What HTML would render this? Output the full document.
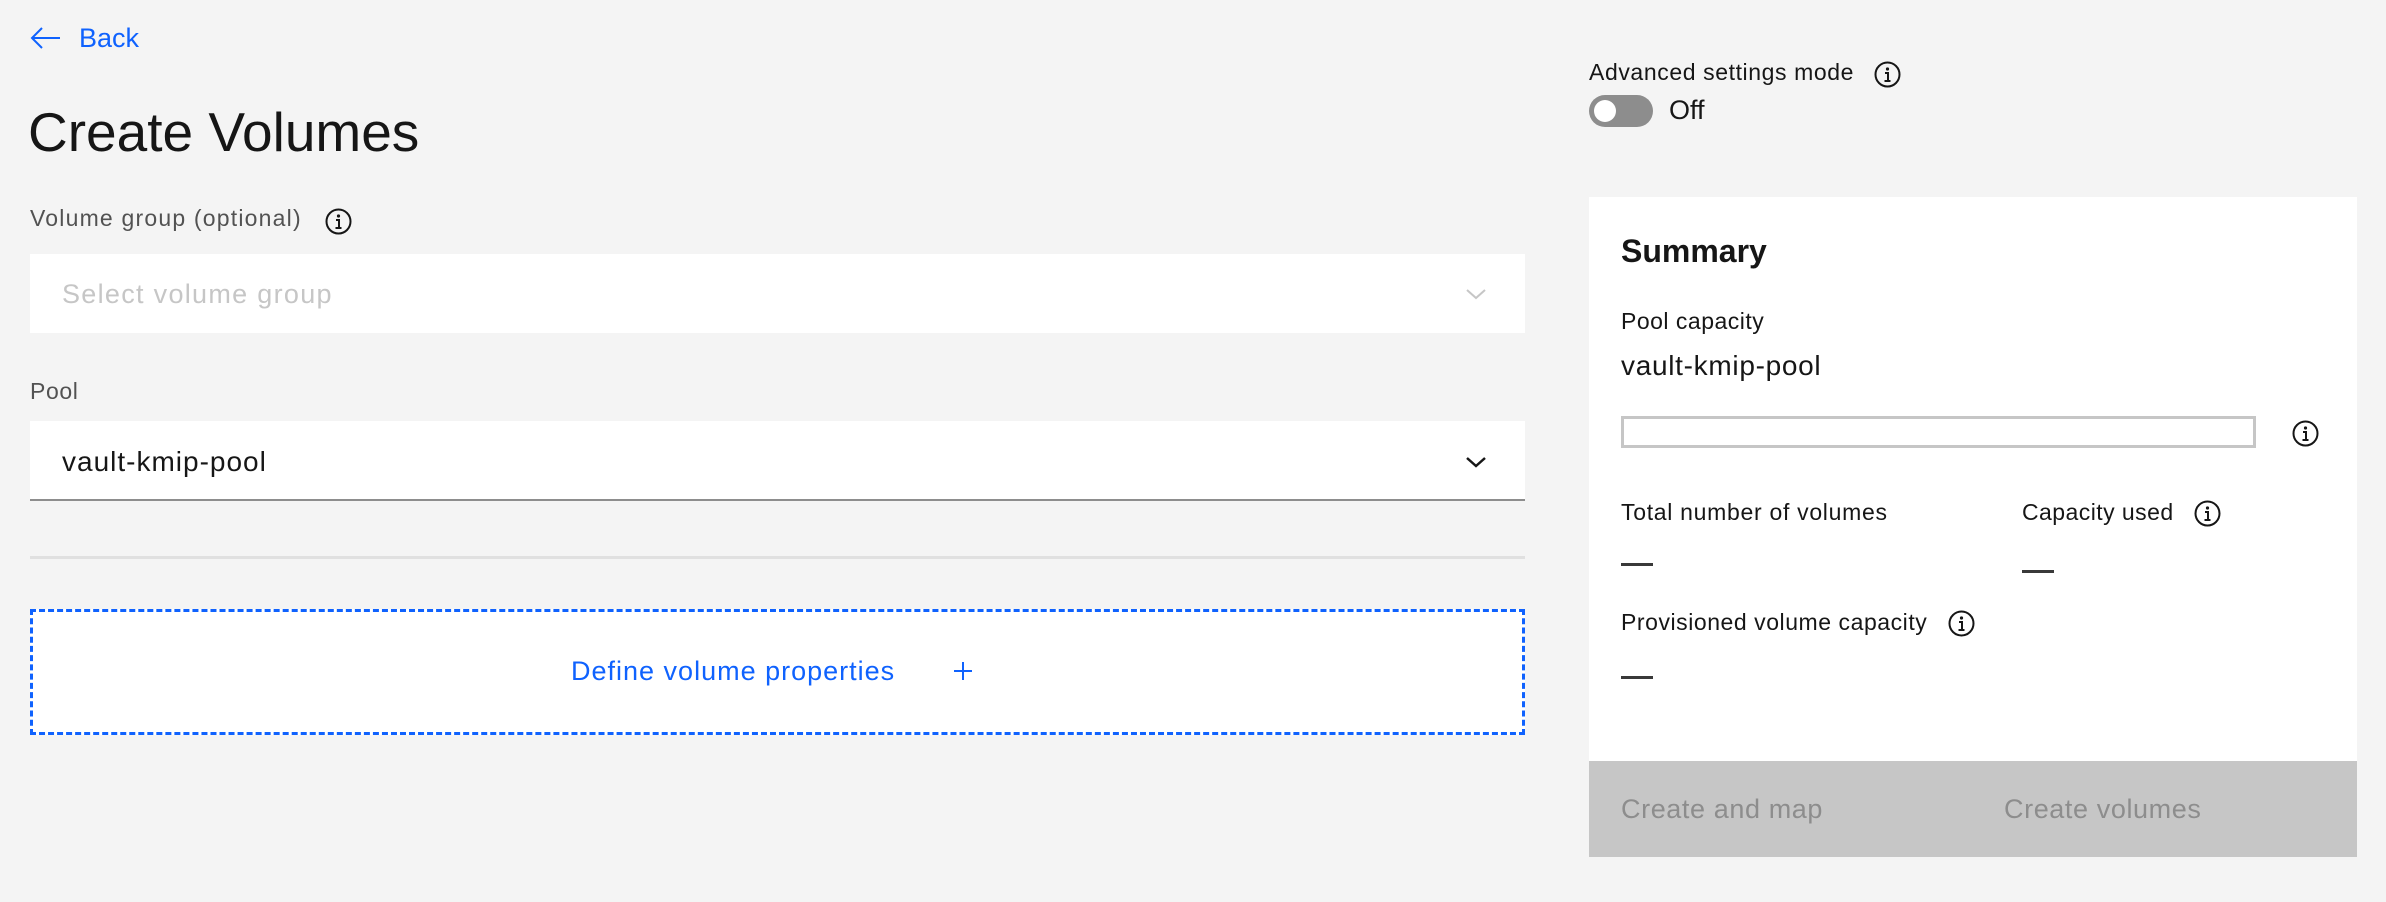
<!DOCTYPE html>
<html><head><meta charset="utf-8"><style>
*{margin:0;padding:0;box-sizing:border-box}
body{width:2386px;height:902px;background:#f4f4f4;font-family:"Liberation Sans",sans-serif;color:#161616;position:relative;overflow:hidden}
.a{position:absolute;white-space:nowrap}
.s{font-size:23px;letter-spacing:0.6px}
.lbl{color:#525252}
.info{position:absolute;width:27px;height:27px}
</style></head><body>
<svg class="a" style="left:30px;top:26px" width="31" height="24" viewBox="0 0 31 24"><path d="M12 2 L2 12 L12 22 M2 12 H30" stroke="#0f62fe" stroke-width="2" fill="none"/></svg>
<div class="a" style="left:79px;top:23px;font-size:27px;color:#0f62fe">Back</div>
<div class="a" style="left:28px;top:100px;font-size:55px;color:#161616">Create Volumes</div>

<div class="a s lbl" style="left:30px;top:205px;letter-spacing:1.2px">Volume group (optional)</div>
<svg class="info" style="left:325px;top:208px" viewBox="0 0 27 27"><circle cx="13.5" cy="13.5" r="12" stroke="#161616" stroke-width="2" fill="none"/><circle cx="13.5" cy="8" r="1.6" fill="#161616"/><path d="M11 12h3v8 M10.5 20h6" stroke="#161616" stroke-width="2" fill="none"/></svg>
<div class="a" style="left:30px;top:254px;width:1495px;height:79px;background:#fff"></div>
<div class="a" style="left:62px;top:279px;font-size:27px;letter-spacing:1.3px;color:#c6c6c6">Select volume group</div>
<svg class="a" style="left:1465px;top:287px" width="22" height="14" viewBox="0 0 22 14"><path d="M2 3 L11 11 L20 3" stroke="#c6c6c6" stroke-width="2" fill="none"/></svg>

<div class="a s lbl" style="left:30px;top:378px">Pool</div>
<div class="a" style="left:30px;top:421px;width:1495px;height:80px;background:#fff;border-bottom:2px solid #8d8d8d"></div>
<div class="a" style="left:62px;top:446px;font-size:28px;letter-spacing:1px;color:#161616">vault-kmip-pool</div>
<svg class="a" style="left:1465px;top:455px" width="22" height="14" viewBox="0 0 22 14"><path d="M2 3 L11 11 L20 3" stroke="#161616" stroke-width="2.5" fill="none"/></svg>

<div class="a" style="left:30px;top:556px;width:1495px;height:3px;background:#e0e0e0"></div>
<div class="a" style="left:30px;top:609px;width:1495px;height:126px;background:#fff;border:3px dashed #0f62fe"></div>
<div class="a" style="left:571px;top:656px;font-size:27px;letter-spacing:1px;color:#0f62fe">Define volume properties</div>
<svg class="a" style="left:953px;top:661px" width="20" height="20" viewBox="0 0 20 20"><path d="M10 1v18M1 10h18" stroke="#0f62fe" stroke-width="2"/></svg>

<div class="a s" style="left:1589px;top:59px">Advanced settings mode</div>
<svg class="info" style="left:1874px;top:61px" viewBox="0 0 27 27"><circle cx="13.5" cy="13.5" r="12" stroke="#161616" stroke-width="2" fill="none"/><circle cx="13.5" cy="8" r="1.6" fill="#161616"/><path d="M11 12h3v8 M10.5 20h6" stroke="#161616" stroke-width="2" fill="none"/></svg>
<div class="a" style="left:1589px;top:95px;width:64px;height:32px;border-radius:16px;background:#8d8d8d"></div>
<div class="a" style="left:1594px;top:100px;width:22px;height:22px;border-radius:50%;background:#fff"></div>
<div class="a" style="left:1669px;top:95px;font-size:27px">Off</div>

<div class="a" style="left:1589px;top:197px;width:768px;height:660px;background:#fff"></div>
<div class="a" style="left:1621px;top:233px;font-size:32px;font-weight:bold">Summary</div>
<div class="a s" style="left:1621px;top:308px;letter-spacing:0.5px">Pool capacity</div>
<div class="a" style="left:1621px;top:350px;font-size:28px;letter-spacing:0.7px">vault-kmip-pool</div>
<div class="a" style="left:1621px;top:416px;width:635px;height:32px;border:3px solid #c6c6c6"></div>
<svg class="info" style="left:2292px;top:420px" viewBox="0 0 27 27"><circle cx="13.5" cy="13.5" r="12" stroke="#161616" stroke-width="2" fill="none"/><circle cx="13.5" cy="8" r="1.6" fill="#161616"/><path d="M11 12h3v8 M10.5 20h6" stroke="#161616" stroke-width="2" fill="none"/></svg>
<div class="a s" style="left:1621px;top:499px;letter-spacing:0.7px">Total number of volumes</div>
<div class="a s" style="left:2022px;top:499px;letter-spacing:0.45px">Capacity used</div>
<svg class="info" style="left:2194px;top:500px" viewBox="0 0 27 27"><circle cx="13.5" cy="13.5" r="12" stroke="#161616" stroke-width="2" fill="none"/><circle cx="13.5" cy="8" r="1.6" fill="#161616"/><path d="M11 12h3v8 M10.5 20h6" stroke="#161616" stroke-width="2" fill="none"/></svg>
<div class="a" style="left:1621px;top:563px;width:32px;height:3px;background:#393939"></div>
<div class="a" style="left:2022px;top:570px;width:32px;height:3px;background:#393939"></div>
<div class="a s" style="left:1621px;top:609px;letter-spacing:0.55px">Provisioned volume capacity</div>
<svg class="info" style="left:1948px;top:610px" viewBox="0 0 27 27"><circle cx="13.5" cy="13.5" r="12" stroke="#161616" stroke-width="2" fill="none"/><circle cx="13.5" cy="8" r="1.6" fill="#161616"/><path d="M11 12h3v8 M10.5 20h6" stroke="#161616" stroke-width="2" fill="none"/></svg>
<div class="a" style="left:1621px;top:676px;width:32px;height:3px;background:#393939"></div>

<div class="a" style="left:1589px;top:761px;width:768px;height:96px;background:#c6c6c6"></div>
<div class="a" style="left:1621px;top:794px;font-size:27px;letter-spacing:0.6px;color:#8d8d8d">Create and map</div>
<div class="a" style="left:2004px;top:794px;font-size:27px;letter-spacing:0.6px;color:#8d8d8d">Create volumes</div>
</body></html>
